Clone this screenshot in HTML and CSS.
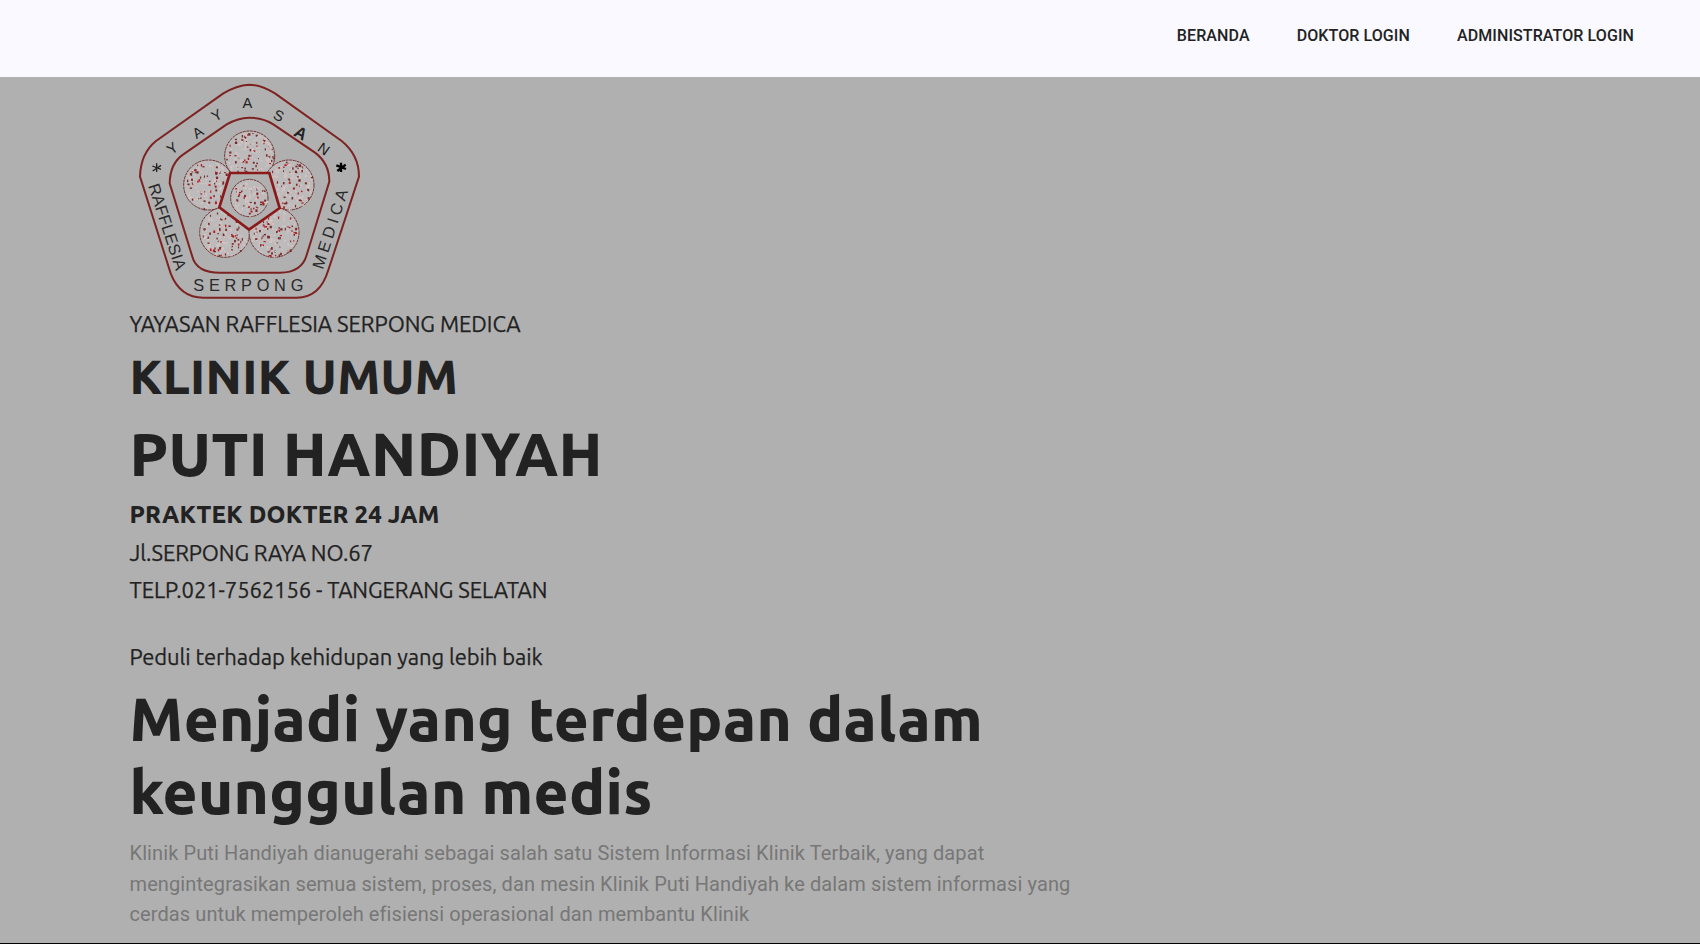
FILE: index.html
```html
<!DOCTYPE html>
<html lang="id">
<head>
<meta charset="utf-8">
<title>Klinik Puti Handiyah</title>
<link rel="stylesheet" href="styles.css">
</head>
<body>
<header class="navbar">
  <nav class="menu"><a>BERANDA</a><a>DOKTOR LOGIN</a><a>ADMINISTRATOR LOGIN</a></nav>
</header>
<main class="hero">
  <svg class="logo" viewBox="30 21 720 684">
    <g class="ring">
      <path d="M387 44Q420 44 465 70L665 213Q717 255 717 320L625 600Q600 683 530 683H250Q180 683 152 610L60 320Q62 250 108 213L310 70Q350 46 387 44Z"/>
      <path d="M387 143Q430 143 460 163L585 248Q628 280 628 335L560 555Q545 608 480 608H300Q230 608 217 560L149 340Q150 280 190 253L320 163Q355 143 387 143Z"/>
    </g>
    <g id="petals"></g>
    <path class="core" d="M330 309H448L479 414L387 479L298 412Z"/>
    <g id="center"></g>
    <g class="letters">
      <text transform="translate(157 235) rotate(-37)">Y</text>
      <text transform="translate(234 187) rotate(-33)">A</text>
      <text transform="translate(290 136) rotate(-30)">Y</text>
      <text transform="translate(382 98)">A</text>
      <text transform="translate(476 137) rotate(24)">S</text>
      <text class="heavy" transform="translate(542 190) rotate(30)">A</text>
      <text transform="translate(611 237) rotate(35)">N</text>
    </g>
    <g class="stars"><path d="M110 280V306M97 288L123 298M123 286L98 303"/><path class="heavy" d="M663 278V306M649 286L678 297M677 284L652 303"/></g>
    <text class="side" transform="translate(84 347) rotate(72)" textLength="270">RAFFLESIA</text>
    <text class="side" transform="translate(608 600) rotate(-72)" textLength="248">MEDICA</text>
    <text class="side" x="220" y="662" textLength="330">SERPONG</text>
  </svg>
  <p class="line org">YAYASAN RAFFLESIA SERPONG MEDICA</p>
  <h2 class="kind">KLINIK UMUM</h2>
  <h1 class="name">PUTI HANDIYAH</h1>
  <h4 class="hours">PRAKTEK DOKTER 24 JAM</h4>
  <p class="line street">Jl.SERPONG RAYA NO.67</p>
  <p class="line phone">TELP.021-7562156 - TANGERANG SELATAN</p>
  <p class="line motto">Peduli terhadap kehidupan yang lebih baik</p>
  <h1 class="title">Menjadi yang terdepan dalam<br>keunggulan medis</h1>
  <p class="about">Klinik Puti Handiyah dianugerahi sebagai salah satu Sistem Informasi Klinik Terbaik, yang dapat<br>mengintegrasikan semua sistem, proses, dan mesin Klinik Puti Handiyah ke dalam sistem informasi yang<br>cerdas untuk memperoleh efisiensi operasional dan membantu Klinik</p>
</main>
<script src="logo.js"></script>
</body>
</html>
```

FILE: styles.css
```css
* { box-sizing: border-box; }
body { margin: 0; height: 944px; overflow: hidden; background: #000; color: #222; font-family: Roboto, sans-serif; }
.navbar { height: 77px; background: #f9f9ff; display: flex; justify-content: flex-end; padding: 22px 66px 0 0; }
.menu { display: flex; gap: 47px; font-size: 16px; font-weight: 500; line-height: 27px; letter-spacing: 0.1px; }
.hero { height: 866px; background: #b0b0b0; padding-left: 129.5px; white-space: nowrap; }
.logo { display: block; width: 240px; height: 228px; }
.line, h1, h2, h4 { margin: 0; font-family: Ubuntu, "Noto Sans", sans-serif; font-weight: 800; }
.line { font-size: 22px; font-weight: 400; -webkit-text-stroke: 0.25px #222; }
.org { line-height: 38px; letter-spacing: -0.035px; }
.kind { font-size: 48px; line-height: 66px; letter-spacing: 0.36px; }
.name { font-size: 60px; line-height: 90px; letter-spacing: 0.42px; }
.hours { font-size: 24px; line-height: 32px; letter-spacing: 0.16px; }
.street { line-height: 44px; letter-spacing: -0.11px; }
.phone { line-height: 29px; letter-spacing: -0.09px; }
.motto { line-height: 40px; margin-top: 33px; letter-spacing: -0.07px; }
.title { font-size: 60px; line-height: 73px; margin-top: 5px; letter-spacing: 0.38px; }
.about { margin: 10px 0 0; font-size: 20px; line-height: 30.6px; letter-spacing: 0.105px; color: #777; }
.ring path { fill: none; stroke: #7c2322; stroke-width: 6; }
.core { fill: #b0b0b0; stroke: #8a1a1a; stroke-width: 8; }
.disc { fill: #bcbaba; stroke: #70302f; stroke-width: 3; stroke-dasharray: 9 2; }
.dark { fill: #792a2a; }
.red { fill: #b51f1f; }
.pale { fill: #d5c4c4; }
.letters text { font: 44px "Liberation Sans Narrow", "Liberation Sans", sans-serif; fill: #222; text-anchor: middle; dominant-baseline: central; }
.letters .heavy { font-weight: 700; font-size: 50px; }
.side { font: 49px "Liberation Sans Narrow", "Liberation Sans", sans-serif; fill: #292929; }
.stars path { stroke: #222; stroke-width: 4; fill: none; }
.stars .heavy { stroke-width: 7; stroke: #000; }
```

FILE: logo.js
```js
// Speckled petals of the emblem, drawn from a fixed seed.
let seed = 7;
const rnd = () => (seed = (seed * 16807) % 2147483647) / 2147483647;
const disc = (cx, cy, r, count) => {
  let out = `<circle class="disc" cx="${cx}" cy="${cy}" r="${r}"/>`;
  for (let i = 0; i < count; i++) {
    const a = rnd() * 6.283, d = Math.sqrt(rnd()) * (r - 4), k = rnd();
    const cls = k < 0.3 ? 'dark' : k < 0.4 ? 'red' : 'pale';
    out += `<rect class="${cls}" x="${(cx + d * Math.cos(a)).toFixed(1)}" y="${(cy + d * Math.sin(a)).toFixed(1)}" width="${(3 + rnd() * 4).toFixed(1)}" height="${(3 + rnd() * 5).toFixed(1)}"/>`;
  }
  return out;
};
document.getElementById('petals').innerHTML =
  [[389, 258], [266, 345], [507, 345], [314, 487], [462, 487]].map(([x, y]) => disc(x, y, 75, 160)).join('');
document.getElementById('center').innerHTML = disc(388, 384, 56, 90);
```
